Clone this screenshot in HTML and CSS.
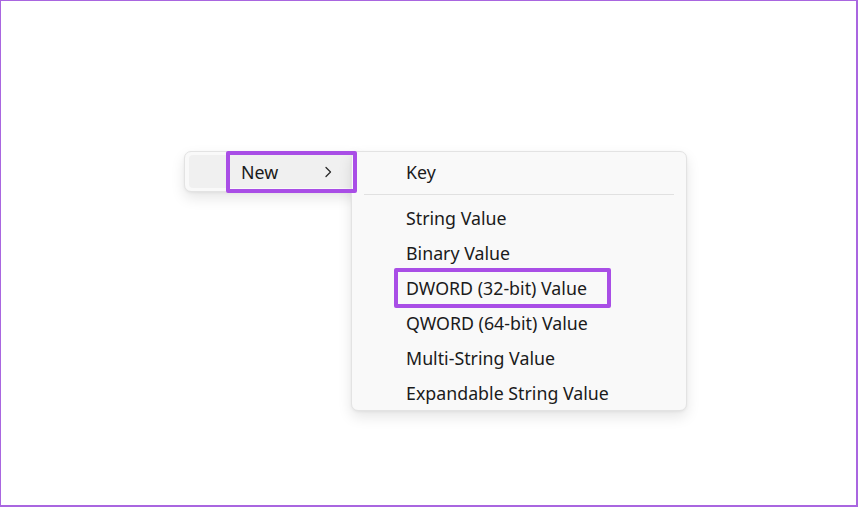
FILE: index.html
```html
<!DOCTYPE html>
<html>
<head>
<meta charset="utf-8">
<link rel="stylesheet" href="styles.css">
</head>
<body>
<div class="frame">
  <div class="menu parent">
    <div class="item new">
      <span class="label">New</span>
      <svg class="chev" width="10" height="12" viewBox="0 0 10 12"><path d="M3 1.5 L7.5 6 L3 10.5" fill="none" stroke="#2b2b2b" stroke-width="1.3" stroke-linecap="round" stroke-linejoin="round"/></svg>
    </div>
  </div>
  <div class="menu sub">
    <div class="item">Key</div>
    <div class="sep"></div>
    <div class="item">String Value</div>
    <div class="item">Binary Value</div>
    <div class="item">DWORD (32-bit) Value</div>
    <div class="item">QWORD (64-bit) Value</div>
    <div class="item">Multi-String Value</div>
    <div class="item">Expandable String Value</div>
  </div>
  <div class="mark mark-new"></div>
  <div class="mark mark-dword"></div>
</div>
</body>
</html>
```
FILE: styles.css
```css
html, body {
  margin: 0;
  padding: 0;
  background: #ffffff;
}
.frame {
  position: relative;
  width: 858px;
  height: 507px;
  box-sizing: border-box;
  border: 1px solid #a966e0;
  border-right-width: 2px;
  border-bottom-width: 2px;
  background: #ffffff;
  font-family: "Noto Sans", "Open Sans", sans-serif;
  font-size: 17.8px;
  color: #1b1b1b;
}
.menu {
  position: absolute;
  box-sizing: border-box;
  background: #f9f9f9;
  border: 1px solid #e3e3e3;
  border-radius: 7px;
  box-shadow: 0 6px 14px rgba(0, 0, 0, 0.10), 0 1px 3px rgba(0, 0, 0, 0.05);
}
.parent {
  left: 183px;
  top: 150px;
  width: 176px;
  height: 41px;
  padding: 3px 4px;
}
.parent .item {
  display: flex;
  align-items: center;
  height: 33px;
  background: #f0f0f0;
  border-radius: 4px;
  padding-left: 52px;
  padding-right: 22px;
}
.parent .label {
  flex: 1;
}
.chev {
  display: block;
}
.sub {
  left: 350px;
  top: 150px;
  width: 336px;
  height: 260px;
  padding: 2px 0 0 0;
}
.sub .item {
  height: 35px;
  display: flex;
  align-items: center;
  padding-left: 54px;
  white-space: nowrap;
}
.sep {
  margin: 5px 12px 5px 12px;
  border-top: 1px solid #e1e1e1;
}
.mark {
  position: absolute;
  box-sizing: border-box;
  border: 4px solid #a94ee6;
  border-radius: 2px;
}
.mark-new {
  left: 225px;
  top: 150px;
  width: 131px;
  height: 42px;
}
.mark-dword {
  left: 393px;
  top: 267px;
  width: 217px;
  height: 40px;
}
```
